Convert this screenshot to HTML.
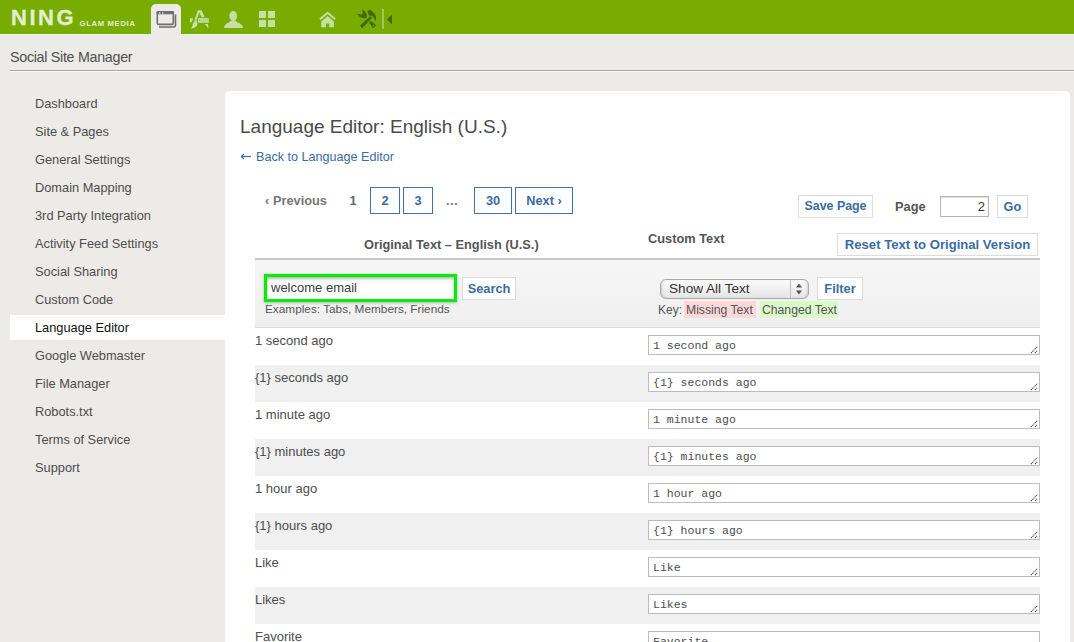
<!DOCTYPE html>
<html><head><meta charset="utf-8">
<style>
*{margin:0;padding:0;box-sizing:border-box}
html,body{width:1074px;height:642px;overflow:hidden;background:#edebe8;font-family:"Liberation Sans",sans-serif;color:#4d4d4d}
.abs{position:absolute}
#hdr{position:absolute;left:0;top:0;width:1074px;height:34px;background:#78ad00}
#hdrline{position:absolute;left:0;top:34px;width:1074px;height:1px;background:#f2f0ef}
.logo{position:absolute;left:11px;top:4.8px;font-weight:bold;font-size:22px;letter-spacing:2.5px;color:#e2efd2;line-height:26px;-webkit-text-stroke:0.3px #e2efd2}
.glam{position:absolute;left:79.5px;top:19px;font-weight:bold;font-size:7.6px;letter-spacing:0.72px;color:#e2efd2;line-height:10px}
.tab{position:absolute;left:151px;top:4px;width:30px;height:31px;background:#edebe8;border-radius:5px 5px 0 0}
.ssm{position:absolute;left:10px;top:48px;font-size:14.3px;letter-spacing:-0.3px;color:#4f4f4f;line-height:18px}
.ssmline{position:absolute;left:10px;top:70px;width:1064px;height:1px;background:#a6a6a6;box-shadow:0 1px 0 #f9f9f9}
.nav{position:absolute;left:10px;top:90px;width:215px}
.nav div{height:28px;line-height:28px;padding-left:25px;font-size:12.8px;color:#4d4d4d}
.nav div.act{background:#fff;color:#111;height:25px;line-height:25px;margin-top:1px;margin-bottom:2px}
#panel{position:absolute;left:225px;top:91px;width:845px;height:560px;background:#fff;border-radius:5px 5px 0 0}
.title{position:absolute;left:240px;top:116px;font-size:19px;color:#4a4a4a;line-height:22px}
.back{position:absolute;left:240px;top:149px;font-size:12.6px;color:#3a6ca3;line-height:16px}
.pg{position:absolute;top:187px;height:27px;line-height:25px;font-size:12.8px;font-weight:bold;color:#3a6ca3;text-align:center}
.pgb{border:1px solid #3f72ab}
.btn{position:absolute;height:23px;line-height:21px;border:1px solid #dcdcdc;background:#fff;font-size:12.8px;font-weight:bold;color:#3a6ca3;text-align:center}
.lbl{position:absolute;font-weight:bold;font-size:12.8px;color:#555;line-height:16px}
#hline{position:absolute;left:255px;top:258px;width:785px;height:2px;background:#c8c8c8}
#fbar{position:absolute;left:255px;top:260px;width:785px;height:67px;background:linear-gradient(#f6f6f6,#efefef)}
#fline{position:absolute;left:255px;top:327px;width:785px;height:1px;background:#dcdcdc}
.row{position:absolute;left:255px;width:785px;height:37px}
.row.g{background:#f0f0f0}
.otxt{position:absolute;left:255px;font-size:13px;color:#4d4d4d;line-height:16px}
.ta{position:absolute;left:648px;width:392px;height:20px;border:1px solid #bcbcbc;background:#fff;font-family:"Liberation Mono",monospace;font-size:11.5px;color:#4d4d4d;line-height:18px;padding-left:4px;padding-top:1px;overflow:hidden}
.grip{position:absolute;right:0px;bottom:0px;width:9px;height:9px}
</style></head><body>
<div id="hdr"></div>
<div id="hdrline"></div>
<div class="logo">NING</div>
<div class="glam">GLAM MEDIA</div>
<div class="tab"></div>
<svg class="abs" style="left:0;top:0" width="420" height="34" viewBox="0 0 420 34">
<!-- window icon -->
<g fill="none" stroke="#6e6e6e">
<path d="M175.5 14.5 V25 a2 2 0 0 1 -2 2 H159" stroke-width="1.6"/>
<rect x="157.3" y="11.8" width="16" height="12.6" rx="1.5" stroke-width="1.6"/>
</g>
<rect x="156.5" y="11" width="17.6" height="3.3" rx="1.2" fill="#6e6e6e"/>
<rect x="159" y="12.4" width="1.4" height="1.2" fill="#edebe8"/>
<rect x="162" y="12.4" width="1.4" height="1.2" fill="#edebe8"/>
<!-- A / brush / ruler icon -->
<g transform="translate(186,6)">
<g fill="#c8e1a6">
<path d="M12 4.3 L15.5 4.3 L18.6 11.2 L15.6 11.2 L13.2 6.5 Z"/>
<path d="M11.9 4.6 L13.8 5.2 L10.1 15 L8.3 14.4 Z"/>
<rect x="12.2" y="12.1" width="10.5" height="4.6"/>
<path d="M4 12.2 L7 12.2 L6.2 15.2 L4 16.7 Z"/>
<path d="M10.8 14.8 Q12.2 18 10.4 20.4 Q8.4 22.6 5 22.4 Q6.6 20.6 6.8 18.2 Q7.4 15.3 10.8 14.8 Z"/>
<path d="M19 18 L22 18 L22.4 22.6 Z"/>
</g>
<g fill="#a6cc6a"><rect x="13.2" y="13" width="0.8" height="1.6"/><rect x="15.2" y="13" width="0.8" height="1.6"/><rect x="17.2" y="13" width="0.8" height="1.6"/><rect x="19.2" y="13" width="0.8" height="1.6"/><rect x="21" y="13" width="0.8" height="1.6"/><rect x="13.2" y="14.6" width="8.6" height="0.6"/></g>
</g>
<!-- person -->
<g fill="#c6e0a4">
<ellipse cx="233.2" cy="16" rx="3.8" ry="5"/>
<path d="M224 27.9 Q224.3 24 228.8 22.4 L231.3 20.6 L235.1 20.6 L237.6 22.4 Q242.7 24 243 27.9 Z"/>
</g>
<!-- grid -->
<g fill="#c6e0a4">
<rect x="259" y="11" width="7" height="7"/><rect x="268" y="11" width="7" height="7"/>
<rect x="259" y="20" width="7" height="7"/><rect x="268" y="20" width="7" height="7"/>
</g>
<!-- home -->
<g transform="translate(314,6)" fill="#c6e0a4">
<path d="M5.4 12.6 L13.6 5.5 L21.8 12.6 L20.6 13.9 L13.6 8 L6.6 13.9 Z"/>
<path d="M7.3 15.4 L13.6 10 L19.9 15.4 V21.2 H15.2 V17.6 H12 V21.2 H7.3 Z"/>
</g>
<!-- tools -->
<g transform="translate(354,6)" fill="#3f6a06">
<path d="M3.3 7.4 L3.6 8.8 Q5.5 11.5 9.5 12.2 L12.4 12 L12.9 9.8 Q12.6 6 8.3 3.3 L8.1 4.2 Q9.3 6.2 8.6 7.9 Q6.8 9.3 3.3 7.4 Z"/>
<path d="M15 16.6 L16.8 14.9 L22.2 19.3 L19 22.3 Z"/>
<path d="M16.3 10.2 L17.9 11.9 L8.2 22.2 L6 19.5 Z"/>
<path d="M13.4 5.6 L15.4 3.5 L17.2 4.4 Q20.5 6.5 21.9 10 Q22.6 12.8 21.4 15.3 Q20.8 12.5 19.2 11 L17.5 9.6 L16.3 10.6 L14.5 8.2 Z"/>
</g>
<path d="M373.2 24.6 L374.6 26.3 L372.4 26.6 Z" fill="#78ad00"/>
<rect x="382.2" y="9" width="1.7" height="20" fill="#a9c96e"/>
<path d="M387 19.5 L392 14.8 L392 24.2 Z" fill="#3f6b08"/>
</svg>

<div class="ssm">Social Site Manager</div>
<div class="ssmline"></div>

<div class="nav">
<div>Dashboard</div>
<div>Site &amp; Pages</div>
<div>General Settings</div>
<div>Domain Mapping</div>
<div>3rd Party Integration</div>
<div>Activity Feed Settings</div>
<div>Social Sharing</div>
<div>Custom Code</div>
<div class="act">Language Editor</div>
<div>Google Webmaster</div>
<div>File Manager</div>
<div>Robots.txt</div>
<div>Terms of Service</div>
<div>Support</div>
</div>

<div id="panel"></div>
<div class="title">Language Editor: English (U.S.)</div>
<svg class="abs" style="left:240px;top:151.5px" width="14" height="9"><path d="M1.6 4.5 H11" stroke="#3a6ca3" stroke-width="1.2"/><path d="M1.2 4.5 L4 2 M1.2 4.5 L4 7" stroke="#3a6ca3" stroke-width="1.1" fill="none"/></svg>
<div class="back" style="left:256px">Back to Language Editor</div>

<div class="pg" style="left:261px;width:70px;color:#777;top:188px">‹ Previous</div>
<div class="pg" style="left:343px;width:20px;color:#666;top:188px">1</div>
<div class="pg pgb" style="left:370px;width:30px">2</div>
<div class="pg pgb" style="left:403px;width:30px">3</div>
<div class="pg" style="left:440px;width:24px;color:#777;top:188px">…</div>
<div class="pg pgb" style="left:474px;width:38px">30</div>
<div class="pg pgb" style="left:515px;width:58px">Next ›</div>

<div class="btn" style="left:798px;top:195px;width:75px;font-size:12.4px">Save Page</div>
<div class="lbl" style="left:895px;top:199px">Page</div>
<div class="abs" style="left:940px;top:196px;width:49px;height:21px;border:1px solid #b4b4b4;box-shadow:inset 0 1px 1px #ddd;background:#fff;font-size:13px;color:#333;text-align:right;padding-right:3px;line-height:19px">2</div>
<div class="btn" style="left:997px;top:195px;width:31px">Go</div>

<div class="lbl" style="left:364px;top:237px">Original Text – English (U.S.)</div>
<div class="lbl" style="left:648px;top:231px">Custom Text</div>
<div class="btn" style="left:837px;top:233px;width:201px;font-size:13.1px">Reset Text to Original Version</div>

<div id="hline"></div>
<div id="fbar"></div>
<div id="fline"></div>

<div class="abs" style="left:264px;top:274px;width:193px;height:28px;border:3px solid #00ee00;background:#fff;box-shadow:inset 0 2px 3px rgba(0,0,0,.28), 0 1px 3px rgba(0,0,0,.25);font-size:13px;color:#3c3c3c;line-height:22px;padding-left:4px">welcome email</div>
<div class="btn" style="left:462px;top:277px;width:54px">Search</div>
<div class="abs" style="left:265px;top:302px;font-size:11.8px;color:#555;line-height:14px">Examples: Tabs, Members, Friends</div>

<div class="abs" style="left:660px;top:279px;width:149px;height:20px;border:1px solid #a8a8a8;border-radius:6px;background:linear-gradient(#fbfbfb,#f0f0f0 50%,#e4e4e4);box-shadow:inset 2px 0 2px -1px rgba(0,0,0,.15), inset -2px 0 2px -1px rgba(0,0,0,.12);font-size:13.6px;color:#333;line-height:18px;padding-left:8px">Show All Text</div>
<div class="abs" style="left:790px;top:280px;width:1px;height:18px;background:#bdbdbd"></div>
<svg class="abs" style="left:795px;top:282px" width="8" height="14"><path d="M1 5.5 L4 1.5 L7 5.5 Z M1 8.5 L7 8.5 L4 12.5 Z" fill="#555"/></svg>
<div class="btn" style="left:817px;top:277px;width:46px">Filter</div>
<div class="abs" style="left:658px;top:302px;font-size:12px;color:#555;line-height:17px">Key:</div>
<div class="abs" style="left:684px;top:301px;width:72px;height:17px;background:#fdd8d8;font-size:12.2px;color:#555;line-height:19px;padding-left:2px">Missing Text</div>
<div class="abs" style="left:760px;top:301px;width:78px;height:17px;background:#dcf9cb;font-size:12.2px;color:#555;line-height:19px;padding-left:2px">Changed Text</div>

<div class="row" style="top:328px"></div>
<div class="row g" style="top:365px"></div>
<div class="row" style="top:402px"></div>
<div class="row g" style="top:439px"></div>
<div class="row" style="top:476px"></div>
<div class="row g" style="top:513px"></div>
<div class="row" style="top:550px"></div>
<div class="row g" style="top:587px"></div>
<div class="row" style="top:624px"></div>

<div class="otxt" style="top:333px">1 second ago</div>
<div class="otxt" style="top:370px">{1} seconds ago</div>
<div class="otxt" style="top:407px">1 minute ago</div>
<div class="otxt" style="top:444px">{1} minutes ago</div>
<div class="otxt" style="top:481px">1 hour ago</div>
<div class="otxt" style="top:518px">{1} hours ago</div>
<div class="otxt" style="top:555px">Like</div>
<div class="otxt" style="top:592px">Likes</div>
<div class="otxt" style="top:629px">Favorite</div>

<div class="ta" style="top:335px">1 second ago<svg class="grip" width="9" height="9" viewBox="0 0 9 9"><path d="M1 8 L7.5 1.5 M5 8 L7.5 5.5" stroke="#4a4a4a" stroke-width="1.1" stroke-dasharray="1.2 0.6"/></svg></div>
<div class="ta" style="top:372px">{1} seconds ago<svg class="grip" width="9" height="9" viewBox="0 0 9 9"><path d="M1 8 L7.5 1.5 M5 8 L7.5 5.5" stroke="#4a4a4a" stroke-width="1.1" stroke-dasharray="1.2 0.6"/></svg></div>
<div class="ta" style="top:409px">1 minute ago<svg class="grip" width="9" height="9" viewBox="0 0 9 9"><path d="M1 8 L7.5 1.5 M5 8 L7.5 5.5" stroke="#4a4a4a" stroke-width="1.1" stroke-dasharray="1.2 0.6"/></svg></div>
<div class="ta" style="top:446px">{1} minutes ago<svg class="grip" width="9" height="9" viewBox="0 0 9 9"><path d="M1 8 L7.5 1.5 M5 8 L7.5 5.5" stroke="#4a4a4a" stroke-width="1.1" stroke-dasharray="1.2 0.6"/></svg></div>
<div class="ta" style="top:483px">1 hour ago<svg class="grip" width="9" height="9" viewBox="0 0 9 9"><path d="M1 8 L7.5 1.5 M5 8 L7.5 5.5" stroke="#4a4a4a" stroke-width="1.1" stroke-dasharray="1.2 0.6"/></svg></div>
<div class="ta" style="top:520px">{1} hours ago<svg class="grip" width="9" height="9" viewBox="0 0 9 9"><path d="M1 8 L7.5 1.5 M5 8 L7.5 5.5" stroke="#4a4a4a" stroke-width="1.1" stroke-dasharray="1.2 0.6"/></svg></div>
<div class="ta" style="top:557px">Like<svg class="grip" width="9" height="9" viewBox="0 0 9 9"><path d="M1 8 L7.5 1.5 M5 8 L7.5 5.5" stroke="#4a4a4a" stroke-width="1.1" stroke-dasharray="1.2 0.6"/></svg></div>
<div class="ta" style="top:594px">Likes<svg class="grip" width="9" height="9" viewBox="0 0 9 9"><path d="M1 8 L7.5 1.5 M5 8 L7.5 5.5" stroke="#4a4a4a" stroke-width="1.1" stroke-dasharray="1.2 0.6"/></svg></div>
<div class="ta" style="top:631px">Favorite<svg class="grip" width="9" height="9" viewBox="0 0 9 9"><path d="M1 8 L7.5 1.5 M5 8 L7.5 5.5" stroke="#4a4a4a" stroke-width="1.1" stroke-dasharray="1.2 0.6"/></svg></div>
</body></html>
